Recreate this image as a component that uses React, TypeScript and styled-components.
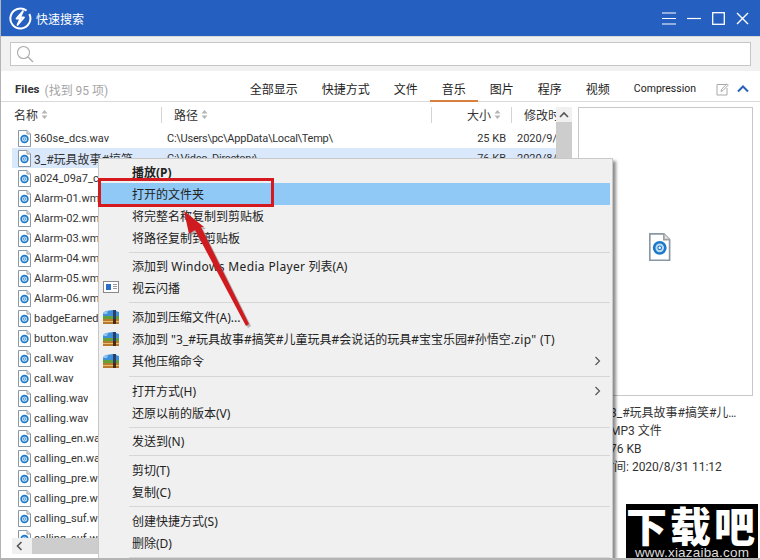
import React from "react";
import styled, { createGlobalStyle } from "styled-components";

const Global = createGlobalStyle`
  html, body { margin: 0; padding: 0; overflow: hidden; background: #fff; }
  #root { width: 760px; height: 560px; }
  * { box-sizing: border-box; }
`;

const Win = styled.div`
  position: relative; width: 760px; height: 560px; overflow: hidden;
  display: flex; flex-direction: column; background: #fff; color: #222;
  font-family: "Roboto", "Noto Sans CJK SC", sans-serif; font-size: 12px;
  border-left: 1px solid #b4b4b4; border-bottom: 2px solid #b4b4b4;
`;
const TitleBar = styled.div`
  flex: none; height: 36px; background: #255fbf; color: #fff;
  display: flex; align-items: center; padding: 0 11px 0 7px; gap: 4px;
`;
const TitleText = styled.span`font-size: 12px; flex: 1;`;
const WinIcons = styled.div`display: flex; align-items: center; gap: 11px;`;
const SearchWrap = styled.div`
  flex: none; height: 35px; background: #f1f1f1; padding: 5px 9px 6px; border-top: 1px solid #d8d8d8;
`;
const SearchBox = styled.div`
  height: 24px; background: #fff; border: 1px solid #c6c6c6; display: flex; align-items: center; padding-left: 5px;
`;
const TabRow = styled.div`
  flex: none; height: 31px; display: flex; align-items: stretch; padding: 0 11px 0 14px;
  border-bottom: 1px solid #d9d9d9;
`;
const FilesLabel = styled.div`
  flex: 1; display: flex; align-items: center; gap: 5px; font-weight: 700; font-size: 11.5px; padding-top: 6px; color: #333;
`;
const Found = styled.span`font-weight: 400; font-size: 12px; color: #a5a5a5;`;
const Tab = styled.div<{ $active?: boolean; $small?: boolean }>`
  padding: 6px 12px 0; display: flex; align-items: center; color: #222; white-space: nowrap;
  font-size: ${(p) => (p.$small ? "10.5px" : "12px")};
  border-bottom: 2px solid ${(p) => (p.$active ? "#d9803f" : "transparent")};
  margin-bottom: -1px;
`;
const TabTools = styled.div`display: flex; align-items: center; gap: 8px; margin-left: 8px; padding-top: 6px;`;
const Body = styled.div`flex: 1; min-height: 0; display: flex; padding-left: 11px;`;
const ListPane = styled.div`
  position: relative; width: 561px; flex: none; display: flex; min-height: 0;
`;
const ListCol = styled.div`
  width: 544px; flex: none; display: flex; flex-direction: column; overflow: hidden;
`;
const HeadRow = styled.div`
  flex: none; height: 25px; display: grid; grid-template-columns: 149px 270px 80px 1fr; align-items: center; white-space: nowrap;
`;
const HeadCell = styled.div<{ $right?: boolean; $bar?: boolean }>`
  display: flex; align-items: center; gap: 3px; height: 16px; overflow: hidden;
  justify-content: ${(p) => (p.$right ? "flex-end" : "flex-start")};
  padding: ${(p) => (p.$right ? "0 10px 0 0" : p.$bar ? "0 0 0 12px" : "0 0 0 2px")};
  border-left: ${(p) => (p.$bar ? "1px solid #d4d4d4" : "none")};
  font-size: 12px; color: #333;
`;
const Rows = styled.div`flex: 1; min-height: 0; overflow: hidden; padding-top: 1px;`;
const Row = styled.div<{ $sel?: boolean }>`
  height: 20px; display: grid; grid-template-columns: 149px 270px 75px 1fr; align-items: center;
  background: ${(p) => (p.$sel ? "#d9e8fb" : "transparent")}; white-space: nowrap;
`;
const NameCell = styled.div`display: flex; align-items: center; gap: 3px; padding: 0 13px 0 6px; overflow: hidden; color: #333;`;
const NameText = styled.span<{ $cjk?: boolean }>`
  overflow: hidden; text-overflow: ellipsis; font-size: ${(p) => (p.$cjk ? "12px" : "11px")};
`;
const PathCell = styled.div`padding-left: 6px; overflow: hidden; color: #333; font-size: 11px; letter-spacing: -.25px;`;
const SizeCell = styled.div`text-align: right; color: #333; font-size: 11px;`;
const DateCell = styled.div`padding-left: 11px; overflow: hidden; color: #333; font-size: 11px;`;
const HScroll = styled.div`
  flex: none; height: 16px; margin-bottom: 4px; background: #f0f0f0; display: flex; align-items: center; padding-left: 4px;
`;
const HThumb = styled.div`flex: 1; height: 16px; margin-left: 9px; background: #cdcdcd;`;
const VScroll = styled.div`
  width: 16px; flex: none; margin-top: 5px; background: #f0f0f0; display: flex; flex-direction: column; align-items: center;
`;
const VArrow = styled.div`height: 15px; display: flex; align-items: center;`;
const VThumb = styled.div`width: 16px; height: 260px; background: #cdcdcd;`;
const Preview = styled.div`
  flex: 1; display: flex; flex-direction: column; padding: 5px 7px 0 5px;
`;
const PreviewBox = styled.div`
  flex: none; height: 289px; border: 1px solid #c8c8c8; background: #fff;
  display: flex; align-items: center; justify-content: center; padding-right: 11px; padding-bottom: 8px;
`;
const PreviewInfo = styled.div`
  padding-top: 8px; display: flex; flex-direction: column; color: #333;
`;
const InfoLine = styled.div<{ $indent?: boolean }>`
  height: 18px; line-height: 18px; white-space: nowrap; padding-left: ${(p) => (p.$indent ? "32px" : "0")}; font-size: 12px;
`;

const Menu = styled.div`
  position: absolute; left: 97px; top: 158px; width: 515px; height: 420px;
  background: #f0f0f0; border: 1px solid #c9c9c9; padding: 2px 2px 0 0;
  box-shadow: 3px 3px 3px rgba(0,0,0,.45); color: #222;
  font-family: "Noto Sans", "Noto Sans CJK SC", sans-serif;
`;
const Item = styled.div<{ $hi?: boolean; $bold?: boolean }>`
  position: relative; height: 22px; display: flex; align-items: center; padding-left: 33px;
  white-space: pre; font-weight: ${(p) => (p.$bold ? 700 : 400)};
  background: ${(p) => (p.$hi ? "#90c8f6" : "transparent")}; font-size: 12px;
`;
const Latin = styled.span`letter-spacing: .35px;`;
const ItemIcon = styled.span`position: absolute; left: 4px; top: 4px; display: flex;`;
const ItemArrow = styled.span`position: absolute; right: 9px; top: 6px; display: flex;`;
const Sep = styled.div<{ $h?: number }>`
  height: ${(p) => p.$h ?? 6}px; margin-left: 30px; display: flex; align-items: center;
  &::before { content: ""; flex: 1; height: 1px; background: #d6d6d6; }
`;
const RedBox = styled.div`
  position: absolute; left: 97px; top: 178px; width: 176px; height: 29px; border: 3px solid #d41a1f;
`;
const ArrowLayer = styled.svg`position: absolute; left: 170px; top: 200px; overflow: visible;`;
const Mark = styled.div`
  position: absolute; right: 2px; bottom: -2px; width: 132px; height: 56px; background: #000; color: #fff;
  display: flex; flex-direction: column; align-items: center; overflow: hidden;
`;
const MarkBig = styled.div`
  font-family: "Noto Sans CJK SC", sans-serif; font-weight: 900; font-size: 41px; line-height: 41px; letter-spacing: 3px; height: 41px;
`;
const MarkSmall = styled.div`
  font-family: "Liberation Sans", sans-serif; font-size: 13.5px; line-height: 15px; color: #ddd; letter-spacing: .2px;
`;

const FileIcon = ({ s = 1 }: { s?: number }) => (
  <svg width={13 * s} height={17 * s} viewBox="0 0 13 17" style={{ flex: "none" }}>
    <path d="M.5.5H9L12.5 4V16.5H.5Z" fill="#fff" stroke="#8a97a5" />
    <path d="M9 .5V4H12.5" fill="#e4e4e4" stroke="#a0a0a0" />
    <circle cx="6.5" cy="9" r="3.4" fill="#bcdcf4" stroke="#1e78c8" strokeWidth="1.6" />
    <circle cx="6.5" cy="9" r="1.1" fill="#fff" stroke="#1e78c8" strokeWidth=".7" />
  </svg>
);
const Sort = () => (
  <svg width="7" height="9" viewBox="0 0 7 9">
    <path d="M3.5 0 6.5 3.4H.5Z M3.5 9 .5 5.6H6.5Z" fill="#b5b5b5" />
  </svg>
);
const Rar = () => (
  <svg width="16" height="14" viewBox="0 0 16 14">
    <path d="M0 3 3 1 10 0 16 2V6H0Z" fill="#3f8fd8" />
    <path d="M1 1.8 5 1 4 4H0Z" fill="#8cc8f0" />
    <rect x="0" y="6" width="16" height="3" fill="#62a03a" />
    <rect x="0" y="9" width="16" height="5" fill="#b87a2c" />
    <rect x="0" y="11" width="16" height="1" fill="#e8c070" />
    <rect x="10" y="0" width="3" height="14" fill="#27406a" />
    <rect x="10" y="9" width="3" height="5" fill="#4a2c14" />
  </svg>
);
const Chev = () => (
  <svg width="7" height="10" viewBox="0 0 7 10"><path d="M1.5 1 5.5 5 1.5 9" fill="none" stroke="#555" strokeWidth="1.2" /></svg>
);

const names = ["a024_09a7_c.wav","Alarm-01.wma","Alarm-02.wma","Alarm-03.wma","Alarm-04.wma","Alarm-05.wma","Alarm-06.wma","badgeEarned.wav","button.wav","call.wav","call.wav","calling.wav","calling.wav","calling_en.wav","calling_en.wav","calling_pre.wav","calling_pre.wav","calling_suf.wav","calling_suf.wav"];

export default function App() {
  return (
    <Win>
      <Global />
      <TitleBar>
        <svg width="24" height="24" viewBox="0 0 24 24">
          <path d="M18.5 4.6A10 10 0 1 0 21.3 8" fill="none" stroke="#fff" strokeWidth="2" />
          <path d="M15 5 8.5 12.5H12.5L9.5 19 16 11.5H12Z" fill="#255fbf" stroke="#fff" strokeWidth="1.8" strokeLinejoin="round" />
        </svg>
        <TitleText>快速搜索</TitleText>
        <WinIcons>
          <svg width="14" height="13" viewBox="0 0 14 13"><path d="M0 1H14M0 6.5H14M0 12H14" stroke="#fff" strokeWidth="1.2" /></svg>
          <svg width="14" height="13" viewBox="0 0 14 13"><path d="M0 6.5H14" stroke="#fff" strokeWidth="1.2" /></svg>
          <svg width="13" height="13" viewBox="0 0 13 13"><rect x=".7" y=".7" width="11.6" height="11.6" fill="none" stroke="#fff" strokeWidth="1.3" /></svg>
          <svg width="13" height="13" viewBox="0 0 13 13"><path d="M1 1 12 12M12 1 1 12" stroke="#fff" strokeWidth="1.4" /></svg>
        </WinIcons>
      </TitleBar>
      <SearchWrap>
        <SearchBox>
          <svg width="18" height="18" viewBox="0 0 18 18"><circle cx="7.5" cy="7.5" r="6" fill="none" stroke="#aaa" strokeWidth="1.1" /><path d="M12 12 17 17" stroke="#aaa" strokeWidth="1.2" /></svg>
        </SearchBox>
      </SearchWrap>
      <TabRow>
        <FilesLabel>Files <Found>(找到 95 项)</Found></FilesLabel>
        {["全部显示","快捷方式","文件"].map((t) => <Tab key={t}>{t}</Tab>)}
        <Tab $active>音乐</Tab>
        {["图片","程序","视频"].map((t) => <Tab key={t}>{t}</Tab>)}
        <Tab $small>Compression</Tab>
        <TabTools>
          <svg width="13" height="13" viewBox="0 0 13 13"><path d="M10 1.5H1V12H11V5M5 8.5 5.6 6.2 11 .8 12.3 2.1 7 7.5Z" fill="none" stroke="#a8a8a8" strokeWidth="1" /></svg>
          <svg width="12" height="8" viewBox="0 0 12 8"><path d="M1 6.5 6 1.5 11 6.5" fill="none" stroke="#2b62b8" strokeWidth="2" /></svg>
        </TabTools>
      </TabRow>
      <Body>
        <ListPane>
          <ListCol>
            <HeadRow>
              <HeadCell>名称 <Sort /></HeadCell>
              <HeadCell $bar>路径 <Sort /></HeadCell>
              <HeadCell $bar $right>大小 <Sort /></HeadCell>
              <HeadCell $bar>修改时间</HeadCell>
            </HeadRow>
            <Rows>
              <Row>
                <NameCell><FileIcon /><NameText>360se_dcs.wav</NameText></NameCell>
                <PathCell>C:\Users\pc\AppData\Local\Temp\</PathCell>
                <SizeCell>25 KB</SizeCell>
                <DateCell>2020/9/1 10:20</DateCell>
              </Row>
              <Row $sel>
                <NameCell><FileIcon /><NameText $cjk>3_#玩具故事#搞笑#儿童玩具</NameText></NameCell>
                <PathCell>C:\Video_Directory\</PathCell>
                <SizeCell>76 KB</SizeCell>
                <DateCell>2020/8/31 11:12</DateCell>
              </Row>
              {names.map((n, i) => (
                <Row key={i}>
                  <NameCell><FileIcon /><NameText>{n}</NameText></NameCell>
                  <PathCell />
                  <SizeCell />
                  <DateCell />
                </Row>
              ))}
            </Rows>
            <HScroll>
              <svg width="7" height="10" viewBox="0 0 7 10"><path d="M5.5 1 1.5 5 5.5 9" fill="none" stroke="#555" strokeWidth="1.6" /></svg>
              <HThumb />
            </HScroll>
          </ListCol>
          <VScroll>
            <VArrow><svg width="10" height="7" viewBox="0 0 10 7"><path d="M1 6 5 2 9 6" fill="none" stroke="#555" strokeWidth="1.6" /></svg></VArrow>
            <VThumb />
          </VScroll>
        </ListPane>
        <Preview>
          <PreviewBox><FileIcon s={1.65} /></PreviewBox>
          <PreviewInfo>
            <InfoLine $indent>3_#玩具故事#搞笑#儿…</InfoLine>
            <InfoLine $indent>MP3 文件</InfoLine>
            <InfoLine $indent>76 KB</InfoLine>
            <InfoLine>修改时间: 2020/8/31 11:12</InfoLine>
          </PreviewInfo>
        </Preview>
      </Body>

      <Menu>
        <Item $bold>播放(P)</Item>
        <Item $hi>打开的文件夹</Item>
        <Item>将完整名称复制到剪贴板</Item>
        <Item>将路径复制到剪贴板</Item>
        <Sep />
        <Item><span>添加到 <Latin>Windows Media Player</Latin> 列表(A)</span></Item>
        <Item>
          <ItemIcon>
            <svg width="16" height="14" viewBox="0 0 16 14"><rect x=".5" y=".5" width="15" height="11" fill="#fff" stroke="#8a8a8a" /><rect x="3" y="3" width="5" height="6" fill="#2a6fc4" /><path d="M10 3.5H14M10 5.5H14M10 7.5H14" stroke="#999" /></svg>
          </ItemIcon>
          视云闪播
        </Item>
        <Sep $h={7} />
        <Item><ItemIcon><Rar /></ItemIcon>添加到压缩文件(A)...</Item>
        <Item><ItemIcon><Rar /></ItemIcon><span>添加到 "3_#玩具故事#搞笑#儿童玩具#会说话的玩具#宝宝乐园#孙悟空<Latin>.zip" (T)</Latin></span></Item>
        <Item><ItemIcon><Rar /></ItemIcon>其他压缩命令<ItemArrow><Chev /></ItemArrow></Item>
        <Sep $h={8} />
        <Item>打开方式(H)<ItemArrow><Chev /></ItemArrow></Item>
        <Item>还原以前的版本(V)</Item>
        <Sep />
        <Item>发送到(N)</Item>
        <Sep $h={7} />
        <Item>剪切(T)</Item>
        <Item>复制(C)</Item>
        <Sep $h={7} />
        <Item>创建快捷方式(S)</Item>
        <Item>删除(D)</Item>
        <Sep />
      </Menu>

      <RedBox />
      <ArrowLayer width="90" height="135" viewBox="0 0 90 135">
        <path d="M13 11 18 34 24 30 75 126 78 124 30 27 33 27Z" fill="#777" opacity=".5" transform="translate(2 2)" />
        <path d="M13 11 18 34 24 30 75 126 78 124 30 27 33 27Z" fill="#cf1a20" />
      </ArrowLayer>
      <Mark>
        <MarkBig>下载吧</MarkBig>
        <MarkSmall>www.xiazaiba.com</MarkSmall>
      </Mark>
    </Win>
  );
}
